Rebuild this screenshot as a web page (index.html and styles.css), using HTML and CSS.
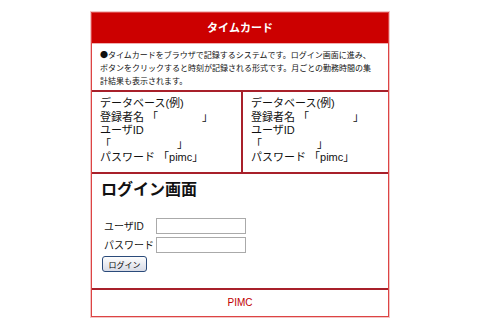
FILE: index.html
```html
<html>
<head>
    <title>タイムカード</title>
    <link rel="stylesheet" href="styles.css">
</head>
<body>
<div id="card">
    <div id="title">タイムカード</div>
    <div id="intro"><span class="dot">●</span>タイムカードをブラウザで記録するシステムです。ログイン画面に進み、<br>ボタンをクリックすると時刻が記録される形式です。月ごとの勤務時間の集<br>計結果も表示されます。</div>
    <div id="samples">
        <div class="sample left">
            データベース(例)<br>
            登録者名 「　　　　」<br>
            ユーザID<br>
            「　　　　　　」<br>
            パスワード 「pimc」
        </div>
        <div class="sample">
            データベース(例)<br>
            登録者名 「　　　　」<br>
            ユーザID<br>
            「　　　　　」<br>
            パスワード 「pimc」
        </div>
    </div>
    <div id="login">
        <h2>ログイン画面</h2>
        <form>
            <div class="row"><span class="label">ユーザID</span><input type="text" id="user_id"></div>
            <div class="row"><span class="label">パスワード</span><input type="password" id="pass_word"></div>
            <button type="button" id="login_btn">ログイン</button>
        </form>
    </div>
    <div id="footer">PIMC</div>
</div>
</body>
</html>
```
FILE: styles.css
```css
body {
    margin: 0;
    padding-top: 12px;
    background: #fff;
    font-family: "Liberation Sans", "Noto Sans CJK JP", sans-serif;
    color: #111;
}
#card {
    width: 296px;
    margin: 0 auto;
    border: 1px solid #d44;
    outline: 1px solid #f3c6c6;
}
#title {
    height: 30px;
    line-height: 30px;
    background: #cc0000;
    color: #fff;
    font-weight: bold;
    font-size: 11px;
    text-align: center;
}
#intro {
    height: 47px;
    padding: 4px 8px 0 8px;
    box-sizing: border-box;
    font-size: 8px;
    line-height: 13px;
    white-space: nowrap;
    border-top: 1px solid #f0b0b0;
}
.dot {
    font-family: "Noto Sans CJK JP", sans-serif;
}
#samples {
    display: grid;
    grid-template-columns: 151px 1fr;
    border-top: 2px solid #a8202a;
}
.sample {
    height: 80px;
    padding: 5px 8px 0 8px;
    box-sizing: border-box;
    font-size: 11px;
    line-height: 13.5px;
    white-space: nowrap;
}
.left {
    border-right: 2px solid #a8202a;
}
#login {
    height: 116px;
    padding: 6px 9px 0 9px;
    box-sizing: border-box;
    border-top: 2px solid #a8202a;
}
#login h2 {
    margin: 0 0 16px 0;
    font-size: 16px;
    line-height: 20px;
}
.row {
    display: flex;
    align-items: center;
    height: 19px;
    padding-left: 3px;
}
.label {
    width: 52px;
    font-size: 10px;
    white-space: nowrap;
}
.row input {
    width: 90px;
    height: 16px;
    border: 1px solid #aaa;
    padding: 0;
    margin: 0;
}
#login_btn {
    margin: 2px 0 0 1px;
    width: 45px;
    height: 16px;
    padding: 0;
    font-family: "Liberation Sans", "Noto Sans CJK JP", sans-serif;
    font-size: 8px;
    border: 1px solid #2a4a7a;
    border-radius: 3px;
    background: linear-gradient(#fdfdfd, #d8dbe6);
}
#footer {
    height: 26px;
    line-height: 26px;
    border-top: 2px solid #a8202a;
    text-align: center;
    color: #c00000;
    font-size: 10px;
}
```
